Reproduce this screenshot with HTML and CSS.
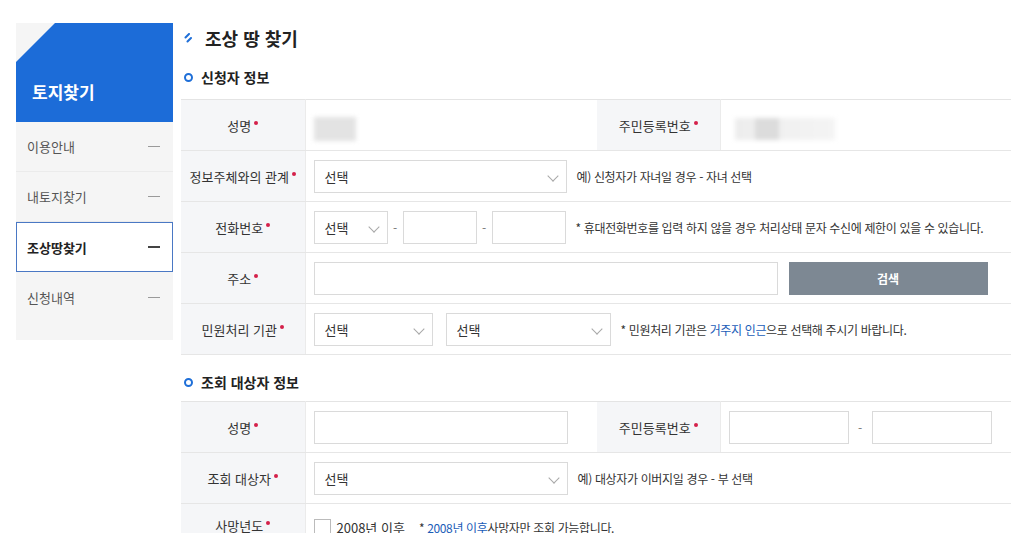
FILE: index.html
```html
<!DOCTYPE html>
<html lang="ko">
<head>
    <meta charset="UTF-8">
    <meta name="viewport" content="width=device-width, initial-scale=1.0">
    <title>조상 땅 찾기</title>
    <link rel="stylesheet" href="styles.css">
</head>
<body>
    <div class="page">
        <!-- 좌측 메뉴 -->
        <aside class="side">
            <div class="side-head">토지찾기</div>
            <ul class="side-menu">
                <li><span>이용안내</span><i class="dash"></i></li>
                <li><span>내토지찾기</span><i class="dash"></i></li>
                <li class="on"><span>조상땅찾기</span><i class="dash"></i></li>
                <li><span>신청내역</span><i class="dash"></i></li>
            </ul>
        </aside>

        <main class="content">
            <h2 class="page-title">
                <svg class="title-ico" width="11" height="11" viewBox="0 0 11 11"><path d="M7 1 L3.5 4.5 M9 5 L5.5 8.5" stroke="#1f6fd8" stroke-width="2" stroke-linecap="round"/></svg>
                조상 땅 찾기
            </h2>

            <h3 class="sec-title"><i class="ring"></i>신청자 정보</h3>
            <table class="form-tbl">
                <colgroup><col style="width:124px"><col style="width:292px"><col style="width:123px"><col></colgroup>
                <tr>
                    <th>성명<em></em></th>
                    <td><div class="blur blur-name"></div></td>
                    <th class="th-mid">주민등록번호<em></em></th>
                    <td><div class="blur blur-rrn"><b></b></div></td>
                </tr>
                <tr>
                    <th>정보주체와의 관계<em></em></th>
                    <td colspan="3">
                        <div class="field">
                            <div class="sel w-253">선택<i class="chev"></i></div>
                            <span class="note">예) 신청자가 자녀일 경우 - 자녀 선택</span>
                        </div>
                    </td>
                </tr>
                <tr>
                    <th>전화번호<em></em></th>
                    <td colspan="3">
                        <div class="field">
                            <div class="sel w-74">선택<i class="chev"></i></div>
                            <span class="hyph">-</span>
                            <div class="inp w-74"></div>
                            <span class="hyph">-</span>
                            <div class="inp w-74"></div>
                            <span class="note">* 휴대전화번호를 입력 하지 않을 경우 처리상태 문자 수신에 제한이 있을 수 있습니다.</span>
                        </div>
                    </td>
                </tr>
                <tr>
                    <th>주소<em></em></th>
                    <td colspan="3">
                        <div class="field">
                            <div class="inp w-464"></div>
                            <button class="btn-search">검색</button>
                        </div>
                    </td>
                </tr>
                <tr>
                    <th>민원처리 기관<em></em></th>
                    <td colspan="3">
                        <div class="field">
                            <div class="sel w-119">선택<i class="chev"></i></div>
                            <div class="sel w-165 ml-13">선택<i class="chev"></i></div>
                            <span class="note">* 민원처리 기관은 <span class="blue">거주지 인근</span>으로 선택해 주시기 바랍니다.</span>
                        </div>
                    </td>
                </tr>
            </table>

            <h3 class="sec-title sec-2"><i class="ring"></i>조회 대상자 정보</h3>
            <table class="form-tbl">
                <colgroup><col style="width:124px"><col style="width:292px"><col style="width:123px"><col></colgroup>
                <tr>
                    <th>성명<em></em></th>
                    <td><div class="inp w-254"></div></td>
                    <th class="th-mid">주민등록번호<em></em></th>
                    <td>
                        <div class="field">
                            <div class="inp w-120"></div>
                            <span class="hyph wide">-</span>
                            <div class="inp w-120"></div>
                        </div>
                    </td>
                </tr>
                <tr>
                    <th>조회 대상자<em></em></th>
                    <td colspan="3">
                        <div class="field">
                            <div class="sel w-254">선택<i class="chev"></i></div>
                            <span class="note">예) 대상자가 이버지일 경우 - 부 선택</span>
                        </div>
                    </td>
                </tr>
                <tr>
                    <th class="th-top">사망년도<em></em></th>
                    <td colspan="3" class="td-top">
                        <div class="field">
                            <span class="chk"></span>
                            <span class="chk-label">2008년 이후</span>
                            <span class="note">* <span class="blue">2008년 이후</span>사망자만 조회 가능합니다.</span>
                        </div>
                    </td>
                </tr>
            </table>
        </main>
    </div>
</body>
</html>
```

FILE: styles.css
```css
body {
    margin: 0;
    background: #fff;
    font-family: "Noto Sans CJK KR", "Noto Sans", sans-serif;
    color: #333;
    overflow: hidden;
}
.page {
    display: flex;
    align-items: flex-start;
    gap: 8px;
    padding: 23px 0 0 16px;
}

/* side menu */
.side {
    width: 157px;
    flex-shrink: 0;
    background: #f5f5f5;
    padding-bottom: 18px;
}
.side-head {
    height: 99px;
    box-sizing: border-box;
    background: #1c6cd8;
    clip-path: polygon(39px 0, 100% 0, 100% 100%, 0 100%, 0 39px);
    color: #fff;
    font-size: 17px;
    font-weight: 700;
    display: flex;
    align-items: flex-end;
    padding: 0 0 18px 16px;
}
.side-menu {
    list-style: none;
    margin: 0;
    padding: 0;
}
.side-menu li {
    height: 50px;
    box-sizing: border-box;
    display: flex;
    align-items: center;
    justify-content: space-between;
    padding: 0 13px 0 11px;
    font-size: 13px;
    color: #555;
    border-bottom: 1px solid #ebebeb;
}
.side-menu li:last-child {
    border-bottom: none;
}
.side-menu .dash {
    width: 12px;
    height: 1px;
    background: #9a9a9a;
}
.side-menu li.on {
    background: #fff;
    border: 1px solid #4a78c4;
    color: #222;
    font-weight: 700;
    padding-left: 10px;
    padding-right: 12px;
}
.side-menu li.on .dash {
    height: 2px;
    background: #444;
}

/* content */
.content {
    width: 830px;
}
.page-title {
    margin: 0;
    height: 30px;
    display: flex;
    align-items: center;
    font-size: 18px;
    font-weight: 700;
    color: #222;
}
.title-ico {
    margin: 0 12px 0 1px;
}
.sec-title {
    margin: 14px 0 12px;
    height: 20px;
    display: flex;
    align-items: center;
    font-size: 14px;
    font-weight: 700;
    color: #222;
}
.sec-2 {
    margin-top: 17px;
    margin-bottom: 9px;
}
.ring {
    width: 5px;
    height: 5px;
    border: 2.5px solid #1f6fd8;
    border-radius: 50%;
    margin: 0 8px 0 3px;
}

.form-tbl {
    width: 100%;
    table-layout: fixed;
    border-collapse: collapse;
    border-top: 1px solid #e4e4e4;
}
.form-tbl th,
.form-tbl td {
    height: 50px;
    padding: 0;
    border-bottom: 1px solid #e6e6e6;
}
.form-tbl th {
    background: #f5f6f8;
    font-size: 13px;
    font-weight: 400;
    color: #333;
    text-align: center;
    border-right: 1px solid #ebebeb;
}
.form-tbl th em {
    display: inline-block;
    width: 4px;
    height: 4px;
    border-radius: 50%;
    background: #d4204a;
    margin-left: 3px;
    vertical-align: 6px;
}
.form-tbl td {
    padding-left: 8px;
}
.form-tbl .th-mid {
    border-right: 1px solid #ebebeb;
}
.form-tbl .th-top,
.form-tbl .td-top {
    vertical-align: top;
    padding-top: 12px;
}
.form-tbl .td-top {
    padding-top: 14px;
}

.field {
    display: flex;
    align-items: center;
}
.sel,
.inp {
    height: 33px;
    box-sizing: border-box;
    border: 1px solid #dadada;
    background: #fff;
}
.sel {
    position: relative;
    display: flex;
    align-items: center;
    padding-left: 10px;
    font-size: 13px;
    color: #333;
}
.chev {
    position: absolute;
    right: 9px;
    top: 11px;
    width: 7px;
    height: 7px;
    border-right: 1px solid #a8a8a8;
    border-bottom: 1px solid #a8a8a8;
    transform: rotate(45deg);
}
.w-74 { width: 74px; }
.w-119 { width: 119px; }
.w-120 { width: 120px; }
.w-165 { width: 165px; }
.w-253 { width: 253px; }
.w-254 { width: 254px; }
.w-464 { width: 464px; }
.ml-13 { margin-left: 13px; }

.hyph {
    width: 15px;
    text-align: center;
    font-size: 12px;
    color: #777;
}
.hyph.wide {
    width: 23px;
}
.note {
    margin-left: 10px;
    font-size: 12px;
    color: #333;
    letter-spacing: -0.35px;
    white-space: nowrap;
}
.blue {
    color: #1b5db8;
}
.btn-search {
    margin-left: 11px;
    width: 199px;
    height: 33px;
    border: none;
    background: #7d8893;
    color: #fff;
    font-family: inherit;
    font-size: 12px;
    font-weight: 700;
}

.blur {
    filter: blur(2px);
}
.blur-name {
    width: 42px;
    height: 24px;
    margin-top: 8px;
    background: #e3e3e3;
}
.blur-rrn {
    width: 100px;
    height: 22px;
    margin: 8px 0 0 6px;
    background: linear-gradient(90deg, #ededed, #f4f4f4);
    position: relative;
}
.blur-rrn b {
    position: absolute;
    left: 20px;
    top: 0;
    width: 24px;
    height: 22px;
    background: #dcdcdc;
}

.chk {
    width: 17px;
    height: 17px;
    box-sizing: border-box;
    border: 1px solid #bbb;
    background: #fff;
}
.chk-label {
    margin-left: 6px;
    font-size: 13px;
    color: #333;
}
.chk-label + .note {
    margin-left: 14px;
}
```
